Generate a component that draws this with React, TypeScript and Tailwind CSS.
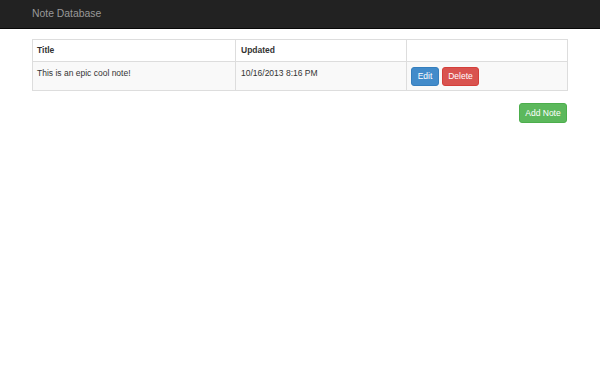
type Note = {
  title: string
  updated: string
}

const notes: Note[] = [
  { title: "This is an epic cool note!", updated: "10/16/2013 8:16 PM" },
]

const NoteRow = ({ note }: { note: Note }) => {
  return (
    <tr className="bg-[#f9f9f9] border-t border-[#ddd]">
      <td className="align-top px-[4px] pt-[5px] pb-[5px] border-r border-[#ddd] leading-[12px]">
        {note.title}
      </td>
      <td className="align-top px-[5px] pt-[5px] pb-[5px] border-r border-[#ddd] leading-[12px]">
        {note.updated}
      </td>
      <td className="align-top px-[4px] pt-[5px] pb-[4px]">
        <div className="flex gap-[3px] items-center">
          <button className="h-[19px] w-[28px] rounded-[3px] border border-[#357ebd] bg-[#428bca] text-white leading-none">
            Edit
          </button>
          <button className="h-[19px] w-[37px] rounded-[3px] border border-[#d43f3a] bg-[#d9534f] text-white leading-none">
            Delete
          </button>
        </div>
      </td>
    </tr>
  )
}

export default function App() {
  return (
    <div className="min-h-[383px] bg-white text-[#333] text-[8.5px]" style={{ fontFamily: '"Liberation Sans", Arial, sans-serif' }}>
      <div className="h-[29px] bg-[#222] border-b border-[#080808] flex items-center px-[32px]">
        <span className="text-[10.4px] text-[#999]">Note Database</span>
      </div>

      <div className="px-[32px] pt-[10px]">
        <table className="w-full border border-[#ddd] border-collapse">
          <thead>
            <tr className="border-b border-[#ddd]">
              <th className="w-[203px] text-left font-bold px-[4px] py-[5px] leading-[11px] border-r border-[#ddd]">Title</th>
              <th className="w-[171px] text-left font-bold px-[5px] py-[5px] leading-[11px] border-r border-[#ddd]">Updated</th>
              <th className="px-[5px] py-[5px]"></th>
            </tr>
          </thead>
          <tbody>
            {notes.map((note) => (
              <NoteRow key={note.title} note={note} />
            ))}
          </tbody>
        </table>

        <div className="flex justify-end mt-[12px] pr-[1px]">
          <button className="h-[20px] w-[48px] rounded-[3px] border border-[#4cae4c] bg-[#5cb85c] text-white leading-none">
            Add Note
          </button>
        </div>
      </div>
    </div>
  )
}
